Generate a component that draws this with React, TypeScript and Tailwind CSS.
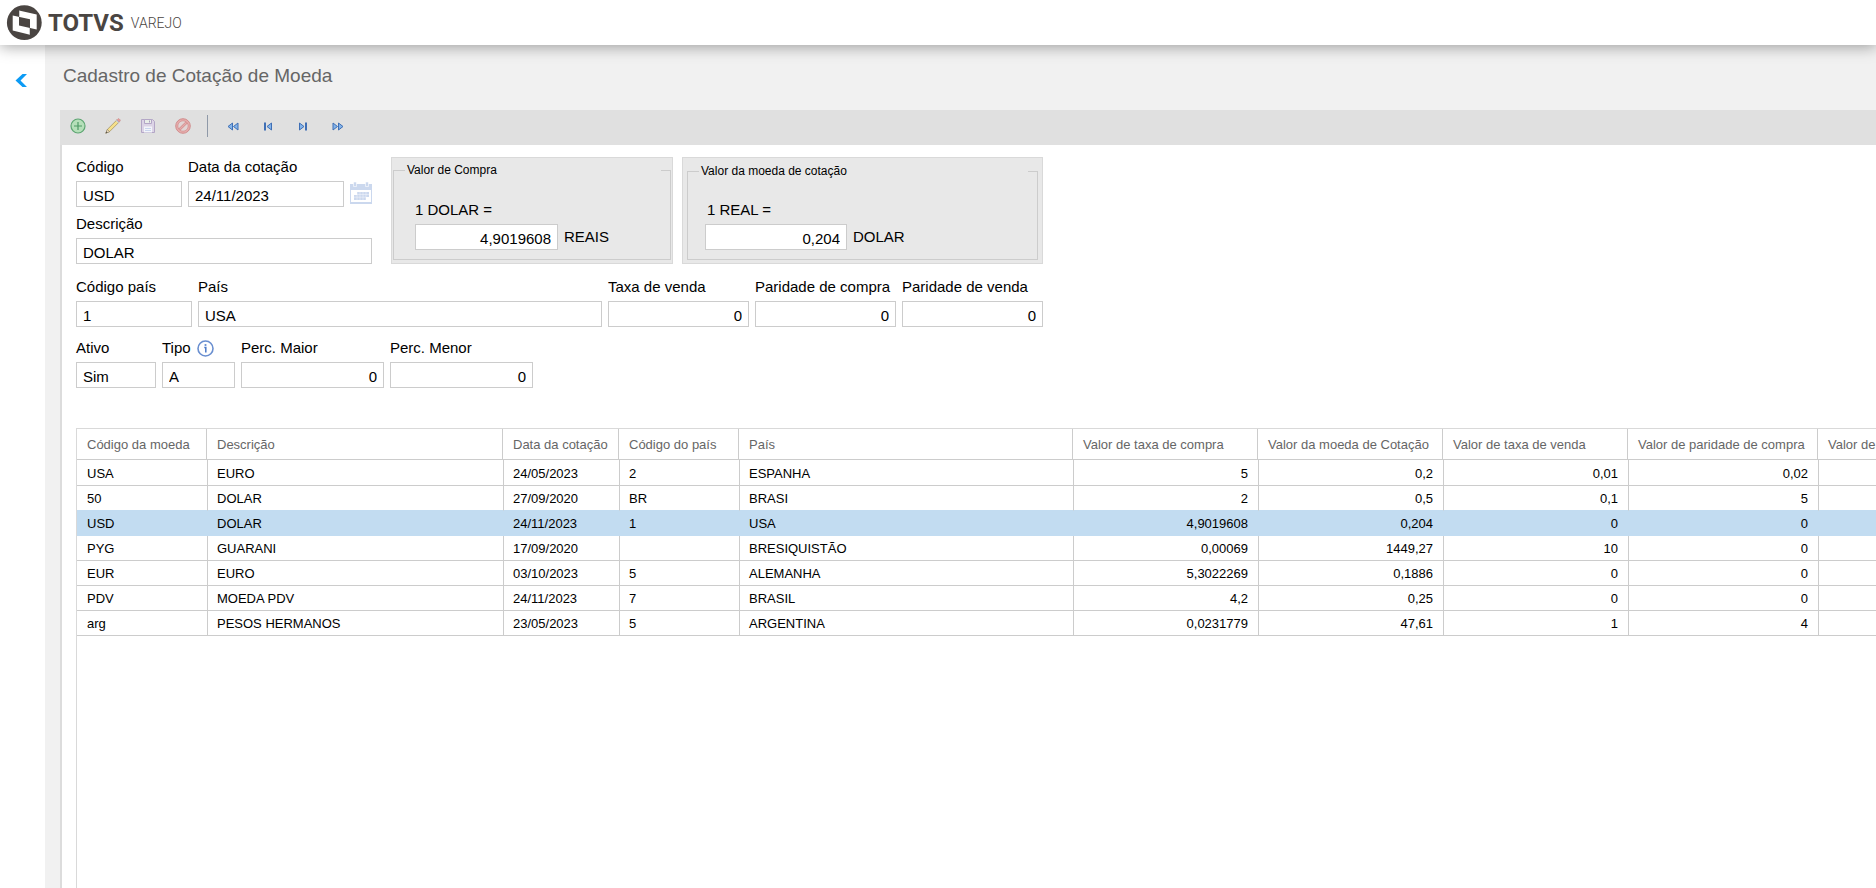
import React from 'react';

type FieldProps = {
  id: string;
  label: string;
  value: string;
  width: string;
  numeric?: boolean;
  extra?: React.ReactNode;
};

const INPUT = 'h-[26px] border border-[#cccccc] bg-white px-1.5 pt-[3px] text-[15px] leading-5 text-black outline-none';

const Field = ({ id, label, value, width, numeric, extra }: FieldProps) => (
  <div className={`flex shrink-0 flex-col gap-1 ${width}`}>
    <div className="flex h-5 items-center gap-1.5">
      <label htmlFor={id} className="whitespace-nowrap text-[15px] leading-5">{label}</label>
      {extra}
    </div>
    <input id={id} defaultValue={value} className={`w-full ${INPUT} ${numeric ? 'text-right' : ''}`} />
  </div>
);

const Logo = () => (
  <svg className="size-9" viewBox="0 0 36 36">
    <circle cx="18.3" cy="17.7" r="17.4" fill="#4a4542" />
    <path
      d="M13 5.500L30.700 9.500V24.500L13 20.500zM6.700 10.500L24 14.300V29.800L6.700 25.500z"
      fill="#fff"
      fillRule="evenodd"
    />
    <path d="M13 5.500v6.300M24 23v6.800" stroke="#4a4542" strokeWidth=".5" />
  </svg>
);

const AddIcon = () => (
  <svg className="size-4" viewBox="0 0 16 16">
    <circle cx="8" cy="8" r="7" fill="#b5dfb9" stroke="#5da572" strokeWidth="1.2" />
    <path d="M8 4v8M4 8h8" stroke="#4f9a66" strokeWidth="1.2" />
  </svg>
);

const PencilIcon = () => (
  <svg className="size-4" viewBox="0 0 16 16">
    <path d="M.8 15.2l1.600-3.800L12 1.800l2.200 2.200-9.600 9.600z" fill="#f6e08a" stroke="#9c8a5a" strokeWidth=".7" />
    <path d="M2.400 11.400l2.200 2.200-3.800 1.600z" fill="#efe0c4" stroke="#8b7c66" strokeWidth=".6" />
    <path d="M11 2.800l1-1 2.200 2.200-1 1z" fill="#b9cbe6" />
    <path d="M12 1.800l1-1q.6-.4 1.200.1l.9.900q.5.600 0 1.200l-.9 1z" fill="#e99a98" stroke="#c08888" strokeWidth=".5" />
    <path d="M.8 15.2l.7-1.700 1 1z" fill="#444" />
  </svg>
);

const SaveIcon = () => (
  <svg className="size-4" viewBox="0 0 16 16">
    <path d="M1.500 1.500h11l2 2v11h-13z" fill="#dcd4e6" stroke="#b3a6c6" />
    <path d="M4.500 1.500h7v4h-7z" fill="#e9eee9" stroke="#b3a6c6" />
    <path d="M9.500 2.500v2" stroke="#a99cbc" />
    <path d="M4 8.500h8v6H4z" fill="#f3f5fa" />
    <path d="M5 10.500h6M5 12.500h6" stroke="#c9d4ec" />
  </svg>
);

const CancelIcon = () => (
  <svg className="size-4" viewBox="0 0 16 16">
    <circle cx="8" cy="8" r="6.200" fill="#e2d4d4" stroke="#e6acac" strokeWidth="2" />
    <path d="M4.300 11.700l7.400-7.400" stroke="#cf8585" strokeWidth="2.600" />
    <path d="M4 12l8-8" stroke="#e6acac" strokeWidth="1.400" />
    <circle cx="8" cy="8" r="7.300" fill="none" stroke="#cf8585" strokeWidth=".9" />
    <circle cx="8" cy="8" r="5.200" fill="none" stroke="#cf8585" strokeWidth=".6" />
  </svg>
);

const FirstIcon = () => (
  <svg className="size-4" viewBox="0 0 16 16" fill="#84b4ea" stroke="#3f6fb5">
    <path d="M7.500 5v7L3 8.500zM13 5v7L8.500 8.500z" />
  </svg>
);

const PrevIcon = () => (
  <svg className="size-4" viewBox="0 0 16 16" fill="#84b4ea" stroke="#3f6fb5">
    <path d="M11.500 5v7L7 8.500z" />
    <path d="M5 4.500v8" strokeWidth="2" />
  </svg>
);

const NextIcon = () => (
  <svg className="size-4" viewBox="0 0 16 16" fill="#84b4ea" stroke="#3f6fb5">
    <path d="M4.500 5v7L9 8.500z" />
    <path d="M11 4.500v8" strokeWidth="2" />
  </svg>
);

const LastIcon = () => (
  <svg className="size-4" viewBox="0 0 16 16" fill="#84b4ea" stroke="#3f6fb5">
    <path d="M3 5v7l4.500-3.500zM8.500 5v7L13 8.500z" />
  </svg>
);

const CalendarIcon = () => (
  <svg className="size-[22px]" viewBox="0 0 22 22">
    <path d="M0 2h22v20H0z" fill="#cbd8ee" />
    <path d="M1 8h20v12H1z" fill="#fff" />
    <path d="M3.500 0h3v4.500h-3zM15.500 0h3v4.500h-3z" fill="#cbd8ee" stroke="#fff" strokeWidth=".6" />
    <path d="M7 10h12v5h-3v3H4v-5h3z" fill="#cbd8ee" />
    <path d="M4 12.500h15M4 15.200h12M7 10v8M10 10v8M13 10v8M16 10v8" stroke="#fff" strokeWidth=".4" />
  </svg>
);

const InfoIcon = () => (
  <svg className="size-[17px]" viewBox="0 0 17 17">
    <circle cx="8.500" cy="8.500" r="7.500" fill="#fff" stroke="#6a8fd0" strokeWidth="1.600" />
    <path d="M7.300 7.500h1.500v5" fill="none" stroke="#4a78c8" strokeWidth="1.500" />
    <path d="M7.600 4.200h1.800v1.600H7.600z" fill="#4a78c8" />
  </svg>
);

const EDIT_ACTIONS = [
  { name: 'Incluir', icon: <AddIcon /> },
  { name: 'Alterar', icon: <PencilIcon /> },
  { name: 'Salvar', icon: <SaveIcon /> },
  { name: 'Cancelar', icon: <CancelIcon /> },
];

const NAV_ACTIONS = [
  { name: 'Primeiro', icon: <FirstIcon /> },
  { name: 'Anterior', icon: <PrevIcon /> },
  { name: 'Próximo', icon: <NextIcon /> },
  { name: 'Último', icon: <LastIcon /> },
];

const COLUMNS = [
  { title: 'Código da moeda', width: 'w-[130px]' },
  { title: 'Descrição', width: 'w-[296px]' },
  { title: 'Data da cotação', width: 'w-[116px]' },
  { title: 'Código do país', width: 'w-[120px]' },
  { title: 'País', width: 'w-[334px]' },
  { title: 'Valor de taxa de compra', width: 'w-[185px]' },
  { title: 'Valor da moeda de Cotação', width: 'w-[185px]' },
  { title: 'Valor de taxa de venda', width: 'w-[185px]' },
  { title: 'Valor de paridade de compra', width: 'w-[190px]' },
  { title: 'Valor de paridade de venda', width: 'w-[190px]' },
];

const ROWS = [
  ['USA', 'EURO', '24/05/2023', '2', 'ESPANHA', '5', '0,2', '0,01', '0,02', ''],
  ['50', 'DOLAR', '27/09/2020', 'BR', 'BRASI', '2', '0,5', '0,1', '5', ''],
  ['USD', 'DOLAR', '24/11/2023', '1', 'USA', '4,9019608', '0,204', '0', '0', ''],
  ['PYG', 'GUARANI', '17/09/2020', '', 'BRESIQUISTÃO', '0,00069', '1449,27', '10', '0', ''],
  ['EUR', 'EURO', '03/10/2023', '5', 'ALEMANHA', '5,3022269', '0,1886', '0', '0', ''],
  ['PDV', 'MOEDA PDV', '24/11/2023', '7', 'BRASIL', '4,2', '0,25', '0', '0', ''],
  ['arg', 'PESOS HERMANOS', '23/05/2023', '5', 'ARGENTINA', '0,0231779', '47,61', '1', '4', ''],
];

const SELECTED = 2;

const QuotesTable = () => (
  <table className="w-[1931px] table-fixed border-separate border-spacing-0 text-[13px] leading-4">
    <thead>
      <tr className="h-[31px]">
        {COLUMNS.map(col => (
          <th
            key={col.title}
            className={`${col.width} whitespace-nowrap border-r border-b border-[#cccccc] px-2.5 pt-0.5 text-left font-normal text-[#666666]`}
          >
            {col.title}
          </th>
        ))}
      </tr>
    </thead>
    <tbody>
      {ROWS.map((row, r) => (
        <tr key={row[0]} className={`${r === 0 ? 'h-[26px]' : 'h-[25px]'} ${r === SELECTED ? 'bg-[#c2dcf1]' : ''}`}>
          {row.map((cell, c) => (
            <td
              key={COLUMNS[c].title}
              className={`whitespace-nowrap border-b pr-2.5 pt-0.5 ${c === 0 ? 'pl-2.5' : 'border-l pl-[9px]'} ${c > 4 ? 'text-right' : 'text-left'} ${
                r === SELECTED ? 'border-[#c2dcf1]' : 'border-[#cccccc]'
              } ${r === SELECTED - 1 ? 'border-b-[#c2dcf1]' : ''}`}
            >
              {cell}
            </td>
          ))}
        </tr>
      ))}
    </tbody>
  </table>
);

export default function App() {
  return (
    <div className="flex min-h-screen flex-col overflow-hidden bg-white font-['Liberation_Sans',Arial,sans-serif] text-black">
      <header className="relative z-10 flex h-[45px] items-center bg-white pl-1.5 shadow-[0_2px_14px_rgba(0,0,0,0.35)]">
        <Logo />
        <span className="ml-1.5 font-[Roboto,sans-serif] text-[24px] leading-8 font-bold text-[#4a4542]">TOTVS</span>
        <span className="ml-[7px] font-[Roboto,sans-serif] text-[14px] leading-5 font-light text-[#4a4542]">VAREJO</span>
      </header>

      <div className="flex flex-1">
        <aside className="w-[45px] shrink-0 bg-white pt-7 pl-[15px]">
          <button type="button" aria-label="Voltar" className="block">
            <svg className="h-[15px] w-3" viewBox="0 0 12 15">
              <path d="M7.500 1H12L5.500 7.500 12 14H7.500L.5 7.500z" fill="#0c9bf5" />
            </svg>
          </button>
        </aside>

        <main className="flex min-w-0 flex-1 flex-col bg-[#f1f1f1] pl-[15px]">
          <h1 className="h-[65px] pt-[19px] pl-[3px] text-[19px] leading-6 text-[#666666]">Cadastro de Cotação de Moeda</h1>

          <div className="flex h-[35px] shrink-0 items-center bg-[#e0e0e0] pb-[3px] pl-2.5">
            <div className="flex gap-[19px]">
              {EDIT_ACTIONS.map(a => (
                <button key={a.name} type="button" aria-label={a.name}>{a.icon}</button>
              ))}
            </div>
            <div className="mr-[17px] ml-4 h-[22px] w-px bg-[#8f99a8]" />
            <div className="flex gap-[19px]">
              {NAV_ACTIONS.map(a => (
                <button key={a.name} type="button" aria-label={a.name}>{a.icon}</button>
              ))}
            </div>
          </div>

          <section className="flex min-w-0 flex-1 flex-col border-l-2 border-[#dcdcdc] bg-white pt-3 pl-3.5">
            <form>
              <div className="flex">
                <div className="flex w-[296px] flex-col gap-[7px]">
                  <div className="flex items-end gap-1.5">
                    <Field id="codigo" label="Código" value="USD" width="w-[106px]" />
                    <Field id="data" label="Data da cotação" value="24/11/2023" width="w-[156px]" />
                    <button type="button" aria-label="Abrir calendário" className="pb-[3px]"><CalendarIcon /></button>
                  </div>
                  <Field id="descricao" label="Descrição" value="DOLAR" width="w-[296px]" />
                </div>

                <div className="ml-[19px] h-[107px] w-[282px] border border-[#d9d9d9] bg-[#e8e8e8] px-px pt-1">
                  <fieldset className="h-[98px] border border-[#cccccc] pl-[21px]">
                    <legend className="-ml-2.5 w-[256px] pl-0.5 text-[12px] leading-4">Valor de Compra</legend>
                    <label htmlFor="compra" className="mt-[22px] block text-[15px] leading-5">1 DOLAR =</label>
                    <div className="mt-1 flex items-center gap-1.5">
                      <input id="compra" defaultValue="4,9019608" className={`w-[143px] text-right ${INPUT}`} />
                      <span className="text-[15px] leading-5">REAIS</span>
                    </div>
                  </fieldset>
                </div>

                <div className="ml-[9px] h-[107px] w-[361px] border border-[#d9d9d9] bg-[#e8e8e8] px-1 pt-[5px]">
                  <fieldset className="h-[97px] border border-[#cccccc] pl-[17px]">
                    <legend className="-ml-1.5 w-[329px] pl-0.5 text-[12px] leading-4">Valor da moeda de cotação</legend>
                    <label htmlFor="cotacao" className="mt-[21px] block pl-0.5 text-[15px] leading-5">1 REAL =</label>
                    <div className="mt-1 flex items-center gap-1.5">
                      <input id="cotacao" defaultValue="0,204" className={`w-[142px] text-right ${INPUT}`} />
                      <span className="text-[15px] leading-5">DOLAR</span>
                    </div>
                  </fieldset>
                </div>
              </div>

              <div className="mt-[13px] flex gap-1.5">
                <Field id="codigo-pais" label="Código país" value="1" width="w-[116px]" />
                <Field id="pais" label="País" value="USA" width="w-[404px]" />
                <Field id="taxa-venda" label="Taxa de venda" value="0" width="w-[141px]" numeric />
                <Field id="paridade-compra" label="Paridade de compra" value="0" width="w-[141px]" numeric />
                <Field id="paridade-venda" label="Paridade de venda" value="0" width="w-[141px]" numeric />
              </div>

              <div className="mt-[11px] flex gap-1.5">
                <Field id="ativo" label="Ativo" value="Sim" width="w-[80px]" />
                <Field id="tipo" label="Tipo" value="A" width="w-[73px]" extra={<InfoIcon />} />
                <Field id="perc-maior" label="Perc. Maior" value="0" width="w-[143px]" numeric />
                <Field id="perc-menor" label="Perc. Menor" value="0" width="w-[143px]" numeric />
              </div>
            </form>

            <div className="mt-10 flex-1 overflow-hidden border-t border-l border-[#d9d9d9]">
              <QuotesTable />
            </div>
          </section>
        </main>
      </div>
    </div>
  );
}
